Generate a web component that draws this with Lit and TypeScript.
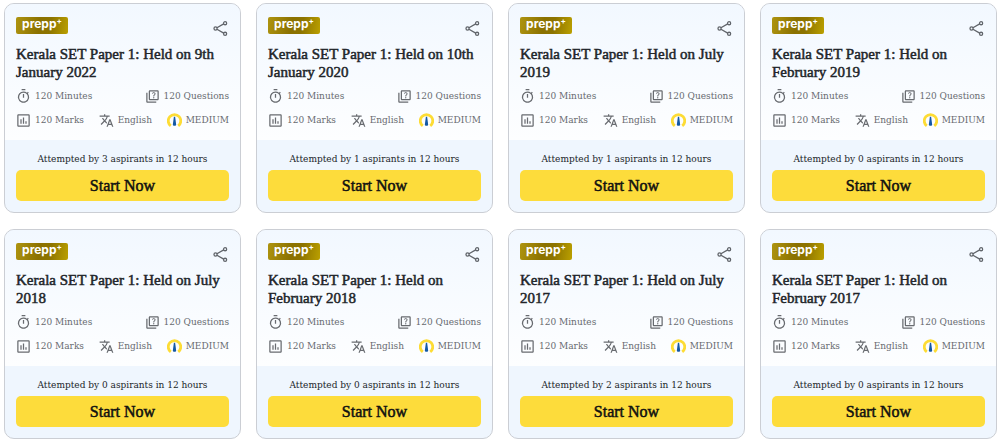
import { LitElement, html, css, svg } from "lit";
import { customElement, property } from "lit/decorators.js";

interface Paper {
  title: string;
  attempts: number;
}

const PAPERS: Paper[] = [
  { title: "Kerala SET Paper 1: Held on 9th January 2022", attempts: 3 },
  { title: "Kerala SET Paper 1: Held on 10th January 2020", attempts: 1 },
  { title: "Kerala SET Paper 1: Held on July 2019", attempts: 1 },
  { title: "Kerala SET Paper 1: Held on February 2019", attempts: 0 },
  { title: "Kerala SET Paper 1: Held on July 2018", attempts: 0 },
  { title: "Kerala SET Paper 1: Held on February 2018", attempts: 0 },
  { title: "Kerala SET Paper 1: Held on July 2017", attempts: 2 },
  { title: "Kerala SET Paper 1: Held on February 2017", attempts: 0 },
];

const timer = svg`<path fill="currentColor" d="M15 0H9v2h6V0zm-4 14h2V8h-2v6zm8.03-6.61 1.42-1.42c-.43-.51-.9-.99-1.41-1.41l-1.42 1.42A8.96 8.96 0 0 0 12 4a9 9 0 1 0 7.03 3.39zM12 20a7 7 0 1 1 0-14 7 7 0 0 1 0 14z"/>`;
const quiz = svg`<path fill="currentColor" d="M4 6H2v14c0 1.100.9 2 2 2h14v-2H4V6zm16-4H8c-1.100 0-2 .9-2 2v12c0 1.100.9 2 2 2h12c1.100 0 2-.9 2-2V4c0-1.100-.9-2-2-2zm0 14H8V4h12v12zm-6.490-5.840c.41-.73 1.180-1.160 1.630-1.800.48-.68.21-1.940-1.140-1.940-.88 0-1.320.67-1.500 1.230l-1.370-.57C11.510 5.960 12.520 5 13.990 5c1.230 0 2.080.56 2.510 1.260.37.6.58 1.730.01 2.570-.63.93-1.230 1.210-1.560 1.810-.13.24-.18.4-.18 1.180h-1.520c.01-.41-.06-1.080.26-1.660zM12.950 13.950c0-.59.47-1.040 1.050-1.040.59 0 1.040.45 1.040 1.040 0 .58-.44 1.050-1.040 1.050-.58 0-1.050-.47-1.050-1.050z"/>`;
const marks = svg`<path fill="currentColor" d="M9 17H7v-7h2v7zm4 0h-2V7h2v10zm4 0h-2v-4h2v4zm3 3H4V4h16v16zm0-18H4c-1.100 0-2 .9-2 2v16c0 1.100.9 2 2 2h16c1.100 0 2-.9 2-2V4c0-1.100-.9-2-2-2z"/>`;
const translate = svg`<path fill="currentColor" d="m12.870 15.070-2.540-2.510.03-.03A17.520 17.520 0 0 0 14.070 6H17V4h-7V2H8v2H1v2h11.170C11.500 7.920 10.440 9.750 9 11.350 8.070 10.320 7.300 9.190 6.690 8h-2c.73 1.630 1.730 3.170 2.980 4.560l-5.090 5.020L4 19l5-5 3.110 3.110.76-2.040zM18.500 10h-2L12 22h2l1.120-3h4.750L21 22h2l-4.500-12zm-2.620 7 1.620-4.330L19.120 17h-3.240z"/>`;
const gauge = svg`<path d="M6 20.500A10 10 0 1 1 18 20.500" fill="none" stroke="#fddc35" stroke-width="4.500"/><path d="M11 6h2l1.500 11a2.600 2.600 0 1 1-5 0z" fill="#1358a5"/>`;
const share = svg`<g fill="none" stroke="currentColor" stroke-width="1.800"><circle cx="5" cy="12" r="2.200"/><circle cx="18.500" cy="4.500" r="2.200"/><circle cx="18.500" cy="19.500" r="2.200"/><path d="m7 11 9.500-5.500M7 13l9.500 5.500"/></g>`;

@customElement("paper-card")
export class PaperCard extends LitElement {
  @property() heading = "";
  @property({ type: Number }) attempts = 0;

  static styles = css`
    :host {
      display: flex;
      flex-direction: column;
      box-sizing: border-box;
      min-width: 0;
      overflow: hidden;
      border: 1px solid #cbced4;
      border-radius: 10px;
      background: #eff6fe;
      color: #212529;
    }
    .body {
      flex: 1;
      padding: 13px 11px 8px;
      background: linear-gradient(#f2f8ff, #fdfeff);
    }
    .top {
      display: flex;
      justify-content: space-between;
      align-items: flex-start;
      height: 28px;
    }
    .logo {
      width: 52px;
      height: 17px;
      border-radius: 2px;
      background: linear-gradient(100deg, #ae9410, #8b7100 45%, #8d7400 65%, #bba000);
      color: #fff;
      font: 700 12px/14px Inter, sans-serif;
      text-align: center;
    }
    .logo sup {
      font-size: 8px;
      line-height: 0;
      vertical-align: 4px;
    }
    .share {
      display: flex;
      margin-top: 3px;
      padding: 0;
      border: 0;
      background: none;
      color: #60646a;
      cursor: pointer;
    }
    svg {
      flex: none;
      width: 15px;
      height: 15px;
    }
    .share svg {
      width: 17px;
      height: 17px;
    }
    h2 {
      margin: 0;
      font-family: "Liberation Serif", serif;
      font-size: 15px;
      font-weight: 400;
      line-height: 18px;
      -webkit-text-stroke: 0.5px currentColor;
    }
    .row {
      display: flex;
      justify-content: space-between;
      height: 24px;
      align-items: center;
      color: #686b70;
      font-size: 10px;
      line-height: 16px;
      white-space: nowrap;
    }
    .facts {
      padding-top: 3px;
    }
    .fact {
      display: flex;
      align-items: center;
      gap: 4px;
    }
    .foot {
      padding: 11px;
      text-align: center;
    }
    .attempts {
      margin: 0 0 3px;
      font-size: 10px;
      line-height: 16px;
    }
    .start {
      display: block;
      width: 100%;
      padding: 1px 0 0;
      border: 0;
      border-radius: 5px;
      background: #fddc3b;
      color: #111;
      font-family: "Liberation Serif", serif;
      font-size: 16px;
      line-height: 30px;
      -webkit-text-stroke: 0.5px currentColor;
      cursor: pointer;
    }
  `;

  private fact(icon: unknown, label: string) {
    return html`<span class="fact"><svg viewBox="0 0 24 24" aria-hidden="true">${icon}</svg>${label}</span>`;
  }

  render() {
    return html`
      <div class="body">
        <div class="top">
          <div class="logo">prepp<sup>+</sup></div>
          <button class="share" aria-label="Share"><svg viewBox="0 0 24 24" aria-hidden="true">${share}</svg></button>
        </div>
        <h2>${this.heading}</h2>
        <div class="facts">
          <div class="row">${this.fact(timer, "120 Minutes")}${this.fact(quiz, "120 Questions")}</div>
          <div class="row">
            ${this.fact(marks, "120 Marks")}${this.fact(translate, "English")}${this.fact(gauge, "MEDIUM")}
          </div>
        </div>
      </div>
      <div class="foot">
        <p class="attempts">Attempted by ${this.attempts} aspirants in 12 hours</p>
        <button class="start">Start Now</button>
      </div>
    `;
  }
}

@customElement("app-root")
export class AppRoot extends LitElement {
  static styles = css`
    :host {
      display: block;
      background: #fff;
      font-family: "DejaVu Serif Condensed", "DejaVu Serif", serif;
    }
    .grid {
      display: grid;
      grid-template-columns: repeat(auto-fill, minmax(230px, 1fr));
      gap: 16px 15px;
      padding: 3px 3px 3px 4px;
    }
  `;

  render() {
    return html`<main class="grid">
      ${PAPERS.map((p) => html`<paper-card .heading=${p.title} .attempts=${p.attempts}></paper-card>`)}
    </main>`;
  }
}
